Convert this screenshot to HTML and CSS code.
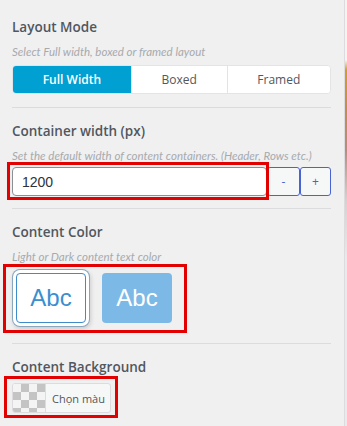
FILE: index.html
```html
<!DOCTYPE html>
<html lang="en">
<head>
<meta charset="UTF-8">
<meta name="viewport" content="width=device-width, initial-scale=1.0">
<title>Layout options</title>
<link rel="stylesheet" href="styles.css">
</head>
<body>

<div class="panel">

  <!-- Layout mode -->
  <div class="section first">
    <div class="title">Layout Mode</div>
    <div class="desc">Select Full width, boxed or framed layout</div>
    <div class="segmented">
      <button class="seg active">Full Width</button>
      <button class="seg">Boxed</button>
      <button class="seg">Framed</button>
    </div>
  </div>

  <!-- Container width -->
  <div class="section">
    <div class="title">Container width (px)</div>
    <div class="desc">Set the default width of content containers. (Header, Rows etc.)</div>
    <div class="numberRow">
      <input class="numberInput" type="text" value="1200">
      <button class="stepButton">-</button>
      <button class="stepButton">+</button>
      <div class="mark markInput"></div>
    </div>
  </div>

  <!-- Content color -->
  <div class="section">
    <div class="title">Content Color</div>
    <div class="desc">Light or Dark content text color</div>
    <div class="swatches">
      <div class="swatch light selected">Abc</div>
      <div class="swatch dark">Abc</div>
      <div class="mark markSwatch"></div>
    </div>
  </div>

  <!-- Content background -->
  <div class="section last">
    <div class="title">Content Background</div>
    <div class="colorRow">
      <button class="colorButton">
        <span class="checker"></span>
        <span class="colorLabel">Chọn màu</span>
      </button>
      <div class="mark markColor"></div>
    </div>
  </div>

</div>

<div class="edge"></div>

</body>
</html>
```

FILE: styles.css
```css
body {
  margin: 0;
  padding: 0;
  display: flex;
  min-height: 100vh;
  background-color: #f0f0f1;
  font-family: "Open Sans", "Liberation Sans", sans-serif;
  color: #50575e;
  overflow: hidden;
}

.panel {
  width: 345px;
  box-sizing: border-box;
  border-right: 1px solid #dcdcde;
  padding: 0 13px 0 12px;
}

/* thin strip of the page behind the panel */
.edge {
  flex: 1;
  background: linear-gradient(#f7f3ee 0, #f7f3ee 60px, #d99a2b 70px, #c98a4a 110px, #b98c7a 150px, #d9cfcf 200px, #ece9ec 260px);
}

.section {
  padding: 13px 0 12px;
  border-bottom: 1px solid #dcdcde;
}
.section.first {
  padding-top: 17px;
  padding-bottom: 13px;
}
.section.last {
  border-bottom: none;
}

.title {
  font-size: 13.5px;
  font-weight: 600;
  line-height: 20px;
  color: #50575e;
}

.desc {
  font-family: Lato, "Open Sans", sans-serif;
  font-style: italic;
  font-size: 11.5px;
  line-height: 16px;
  color: #a7aaad;
  margin-top: 7px;
  margin-bottom: 3px;
}
.first .desc {
  margin-bottom: 5px;
}

/* segmented buttons */
.segmented {
  display: flex;
  height: 29px;
  border: 1px solid #e2e4e7;
  border-radius: 4px;
  background-color: #fff;
  overflow: hidden;
  box-sizing: border-box;
}
.seg {
  flex: 1 1 auto;
  border: none;
  border-left: 1px solid #e2e4e7;
  background-color: #fff;
  font-family: "Open Sans", sans-serif;
  font-size: 12px;
  color: #50575e;
  padding: 0;
  cursor: pointer;
}
.seg:first-child {
  border-left: none;
}
.seg.active {
  background-color: #00a0d2;
  color: #fff;
  font-weight: 600;
}

/* number input */
.numberRow {
  position: relative;
  display: flex;
  height: 29px;
}
.numberInput {
  flex: 1;
  min-width: 0;
  box-sizing: border-box;
  border: 1px solid #8c8f94;
  border-radius: 4px;
  padding: 0 9px;
  font-family: "Liberation Sans", sans-serif;
  font-size: 14px;
  color: #2c3338;
  background-color: #fff;
}
.stepButton {
  width: 33px;
  box-sizing: border-box;
  border: 1px solid #4a63d3;
  border-radius: 3px;
  background-color: #f6f7f7;
  color: #4a63d3;
  font-family: "Open Sans", sans-serif;
  font-size: 12px;
  padding: 0;
  cursor: pointer;
}
.stepButton:last-of-type {
  width: 31px;
}

/* colour swatches */
.swatches {
  position: relative;
  display: flex;
  gap: 16px;
  padding: 5px 0 8px 4px;
}
.swatch {
  width: 70px;
  height: 50px;
  box-sizing: border-box;
  border-radius: 4px;
  display: flex;
  align-items: center;
  justify-content: center;
  font-family: "Liberation Sans", Arial, sans-serif;
  font-size: 24px;
}
.swatch.light {
  background-color: #fff;
  border: 1px solid #3d8ccb;
  color: #3a8fd1;
}
.swatch.selected {
  box-shadow: 0 0 0 3px #fff, 0 0 0 4px #8aa7bd, 1px 2px 4px 4px rgba(0, 0, 0, 0.15);
}
.swatch.dark {
  background-color: #7db9e6;
  color: #fff;
}

/* colour picker button */
.colorRow {
  position: relative;
  margin-top: 6px;
}
.colorButton {
  display: flex;
  align-items: stretch;
  height: 30px;
  padding: 0;
  border: 1px solid #dcdcde;
  border-radius: 3px;
  background-color: #f6f7f7;
  overflow: hidden;
  cursor: pointer;
}
.checker {
  width: 32px;
  background: repeating-conic-gradient(#c4c4c4 0 25%, #f4f4f4 0 50%) 0 0 / 16px 16px;
  border-right: 1px solid #dcdcde;
}
.colorLabel {
  display: flex;
  align-items: center;
  padding: 0 5px 0 6px;
  font-family: "Open Sans", sans-serif;
  font-size: 11px;
  color: #50575e;
}

/* red annotation boxes */
.mark {
  position: absolute;
  box-sizing: border-box;
  border: 3px solid #e30000;
  pointer-events: none;
}
.markInput {
  left: -5px;
  top: -5px;
  width: 262px;
  height: 38px;
}
.markSwatch {
  left: -9px;
  top: -4px;
  width: 184px;
  height: 69px;
}
.markColor {
  left: -8px;
  top: -7px;
  width: 114px;
  height: 42px;
}
```
